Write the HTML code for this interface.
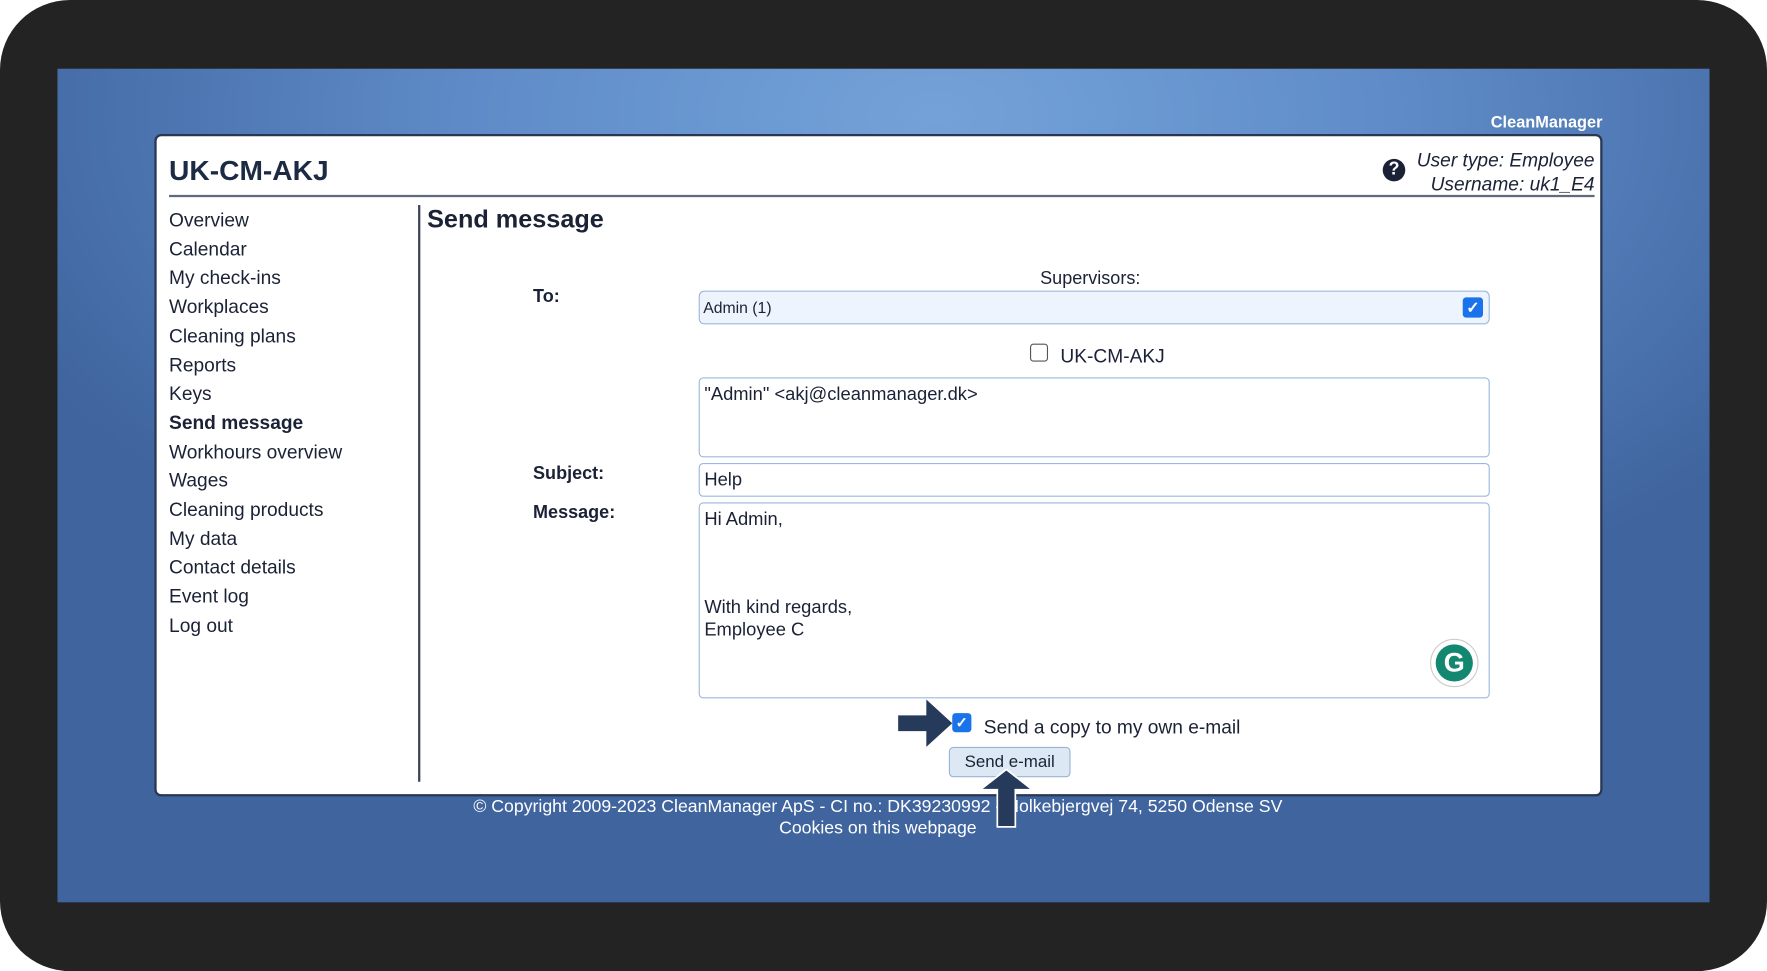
<!DOCTYPE html>
<html><head><meta charset="utf-8"><style>
*{margin:0;padding:0;box-sizing:border-box}
html,body{width:1767px;height:971px;overflow:hidden;background:#fff}
#w{position:absolute;left:0;top:0;width:1568px;height:862px;transform:scale(1.12691,1.1265);transform-origin:0 0;font-family:"Liberation Sans",Arial,sans-serif;color:#1b2236}
.a{position:absolute;white-space:nowrap}
#frame{position:absolute;left:0;top:0;width:1568px;height:862px;background:#232323;border-radius:62px}
#blue{position:absolute;left:51px;top:61px;width:1466px;height:740px;background:radial-gradient(ellipse 900px 500px at 780px 40px,#74a2d8 0%,#5f8cc8 45%,#4a72ad 80%,#3f649e 100%)}
#card{position:absolute;left:137px;top:119px;width:1285px;height:588px;background:#fff;border:2px solid #2a3752;border-radius:6px}
.side{font-size:17px;left:150px}
.box{position:absolute;left:620px;width:702px;border:1px solid #9db7de;border-radius:4px;background:#fff}
.t17{font-size:17px}
.b{font-weight:bold}
</style></head><body><div id="w">
<div id="frame"></div>
<div id="blue"></div>
<div class="a b" style="right:146px;top:101px;font-size:14.5px;color:#fff">CleanManager</div>
<div id="card"></div>
<div class="a b" style="left:150px;top:138px;font-size:25px;color:#1c2a44">UK-CM-AKJ</div>
<div class="a" style="left:150px;top:173px;width:1265px;height:2px;background:#5f6a7c"></div>
<div class="a" style="left:1227px;top:141px;width:20px;height:20px;border-radius:50%;background:#1b2236;color:#fff;font-weight:bold;font-size:16px;text-align:center;line-height:20px">?</div>
<div class="a" style="right:153px;top:132px;font-size:17px;font-style:italic;text-align:right;line-height:21px">User type: Employee<br>Username: uk1_E4</div>
<div class="a side" style="top:183px;line-height:25.7px">Overview<br>Calendar<br>My check-ins<br>Workplaces<br>Cleaning plans<br>Reports<br>Keys<br><b>Send message</b><br>Workhours overview<br>Wages<br>Cleaning products<br>My data<br>Contact details<br>Event log<br>Log out</div>
<div class="a" style="left:371px;top:182px;width:2px;height:512px;background:#3a4458"></div>
<div class="a b" style="left:379px;top:182px;font-size:22.4px">Send message</div>
<div class="a" style="left:923px;top:239px;font-size:16px">Supervisors:</div>
<div class="a b" style="left:473px;top:255px;font-size:16px">To:</div>
<div class="box" style="top:258px;height:30px;background:#eef4fd;border-radius:5px"></div>
<div class="a" style="left:624px;top:265px;font-size:14px">Admin (1)</div>
<div class="a" style="left:1298px;top:264px;width:18px;height:18px;background:#1a73e8;border-radius:3px;color:#fff;font-size:14px;text-align:center;line-height:18px;font-weight:bold">✓</div>
<div class="a" style="left:914px;top:305px;width:16px;height:16px;border:1.5px solid #555;border-radius:3px;background:#fff"></div>
<div class="a t17" style="left:941px;top:307px">UK-CM-AKJ</div>
<div class="box" style="top:335px;height:71px"></div>
<div class="a" style="left:625px;top:341px;font-size:16.3px">"Admin" &lt;akj@cleanmanager.dk&gt;</div>
<div class="a b" style="left:473px;top:412px;font-size:16px">Subject:</div>
<div class="box" style="top:411px;height:30px"></div>
<div class="a" style="left:625px;top:417px;font-size:16.3px">Help</div>
<div class="a b" style="left:473px;top:447px;font-size:16px">Message:</div>
<div class="box" style="top:446px;height:174px"></div>
<div class="a" style="left:625px;top:452px;font-size:16.3px;line-height:19.5px">Hi Admin,<br><br><br><br>With kind regards,<br>Employee C</div>
<div class="a" style="left:1269px;top:567px;width:43px;height:43px;border-radius:50%;border:1px solid #ccc;background:#fff"></div>
<div class="a" style="left:1274px;top:572px;width:33px;height:33px;border-radius:50%;background:#13876f;color:#fff;font-size:24px;text-align:center;line-height:33px;font-weight:bold">G</div>
<div class="a" style="left:845px;top:633px;width:17px;height:17px;background:#1a73e8;border-radius:3px;color:#fff;font-size:13px;text-align:center;line-height:17px;font-weight:bold">✓</div>
<div class="a t17" style="left:873px;top:636px">Send a copy to my own e-mail</div>
<svg class="a" style="left:795px;top:619px" width="52" height="46"><path d="M2 16H27V2L50 23L27 44V30H2Z" fill="#263a5c"/></svg>
<div class="a" style="left:842px;top:663px;width:108px;height:27px;background:#dde8f5;border:1px solid #9bb3d6;border-radius:4px;font-size:15px;text-align:center;line-height:25px">Send e-mail</div>
<div class="a" style="left:0;width:1558px;top:708px;text-align:center;font-size:15.7px;color:#fff;line-height:18.5px">© Copyright 2009-2023 CleanManager ApS - CI no.: DK39230992 - Holkebjergvej 74, 5250 Odense SV<br>Cookies on this webpage</div>
<svg class="a" style="left:866px;top:681px" width="54" height="55"><path d="M27 2L50 20H35V53H19V20H4Z" fill="#263a5c" stroke="#fff" stroke-width="1.5"/></svg>
</div></body></html>
